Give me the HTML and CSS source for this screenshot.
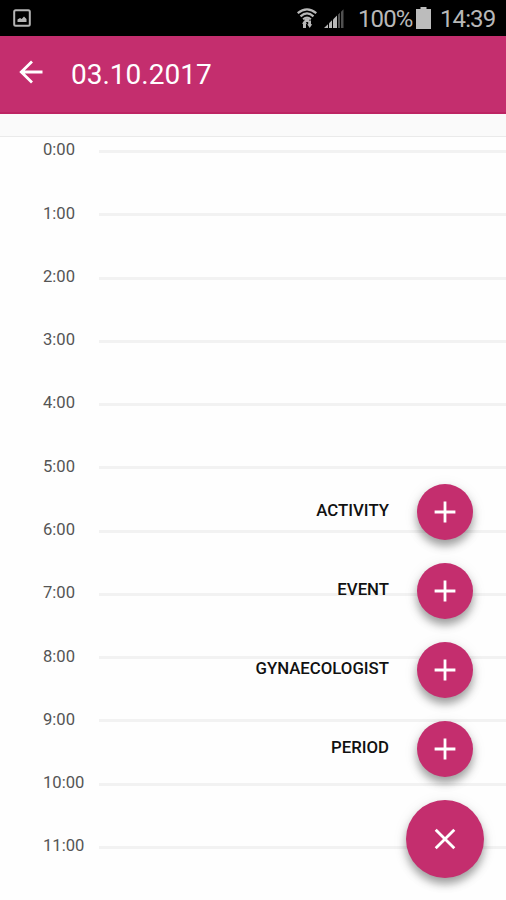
FILE: index.html
```html
<!DOCTYPE html>
<html lang="en">
<head>
<meta charset="utf-8">
<title>03.10.2017</title>
<link rel="stylesheet" href="styles.css">
</head>
<body>
<div class="screen">
  <div class="status">
    <svg class="status-picture" width="18" height="18" viewBox="0 0 18 18"><rect x="1.2" y="1.2" width="15.6" height="15.6" rx="1.5" fill="none" stroke="#b5b5b5" stroke-width="2"/><path d="M4.5 13V10.5L7 9L8.7 10L11 7.5L13.5 10V13Z" fill="#b5b5b5"/></svg>
    <svg class="status-wifi" width="20" height="21" viewBox="0 0 20 21"><g fill="none" stroke="#b8b8b8" stroke-width="2.2"><path d="M.7 5.1Q10-2.5 19.3 5.1"/><path d="M3.5 8.3Q10 2.6 16.5 8.3"/><path d="M6.2 11.4Q10 7.9 13.8 11.4"/></g><path d="M8 10.5H12V14H8ZM5 15.7L7.5 12L10 15.7H9V20H6V15.7ZM10.2 16.3H11.2V12.5H14V16.3H15.2L12.7 20Z" fill="#b8b8b8"/></svg>
    <svg class="status-signal" width="20" height="19" viewBox="0 0 20 19"><path d="M0 19L4 15.2V19Z" fill="#b8b8b8"/><path d="M5 14.2L8 11.3V19H5Z" fill="#b8b8b8"/><path d="M9 10.4L13 6.5V19H9Z" fill="#b8b8b8"/><path d="M14 5.6L16 3.7V19H14ZM17 2.7L19.5 .3V19H17Z" fill="#505050"/></svg>
    <span class="status-percent">100%</span>
    <svg class="status-battery" width="15" height="22" viewBox="0 0 15 22"><path d="M4.5 0H10.5V2H15V22H0V2H4.5Z" fill="#bcbcbc"/></svg>
    <span class="status-time">14:39</span>
  </div>
  <header class="appbar">
    <svg class="back" width="24" height="24" viewBox="0 0 24 24"><path d="M23.5 12H2.5M13 1.6L2.3 12L13 22.4" fill="none" stroke="#fff" stroke-width="2.8"/></svg>
    <h1 class="title">03.10.2017</h1>
  </header>
  <div class="allday"></div>
  <main class="hours">
    <div class="hour"><span class="hour-label">0:00</span><i class="rule"></i></div>
    <div class="hour"><span class="hour-label">1:00</span><i class="rule"></i></div>
    <div class="hour"><span class="hour-label">2:00</span><i class="rule"></i></div>
    <div class="hour"><span class="hour-label">3:00</span><i class="rule"></i></div>
    <div class="hour"><span class="hour-label">4:00</span><i class="rule"></i></div>
    <div class="hour"><span class="hour-label">5:00</span><i class="rule"></i></div>
    <div class="hour"><span class="hour-label">6:00</span><i class="rule"></i></div>
    <div class="hour"><span class="hour-label">7:00</span><i class="rule"></i></div>
    <div class="hour"><span class="hour-label">8:00</span><i class="rule"></i></div>
    <div class="hour"><span class="hour-label">9:00</span><i class="rule"></i></div>
    <div class="hour"><span class="hour-label">10:00</span><i class="rule"></i></div>
    <div class="hour"><span class="hour-label">11:00</span><i class="rule"></i></div>
  </main>
  <div class="actions">
    <div class="action"><span class="action-label">ACTIVITY</span><span class="fab"><svg width="22" height="22" viewBox="0 0 22 22"><path d="M.6 11H21.4M11 .6V21.4" stroke="#fff" stroke-width="2.8"/></svg></span></div>
    <div class="action"><span class="action-label">EVENT</span><span class="fab"><svg width="22" height="22" viewBox="0 0 22 22"><path d="M.6 11H21.4M11 .6V21.4" stroke="#fff" stroke-width="2.8"/></svg></span></div>
    <div class="action"><span class="action-label">GYNAECOLOGIST</span><span class="fab"><svg width="22" height="22" viewBox="0 0 22 22"><path d="M.6 11H21.4M11 .6V21.4" stroke="#fff" stroke-width="2.8"/></svg></span></div>
    <div class="action"><span class="action-label">PERIOD</span><span class="fab"><svg width="22" height="22" viewBox="0 0 22 22"><path d="M.6 11H21.4M11 .6V21.4" stroke="#fff" stroke-width="2.8"/></svg></span></div>
    <span class="fab fab-main"><svg width="22" height="22" viewBox="0 0 22 22"><path d="M1.7 1.7L20.3 20.3M20.3 1.7L1.7 20.3" stroke="#fff" stroke-width="2.8"/></svg></span>
  </div>
</div>
</body>
</html>
```

FILE: styles.css
```css
* { box-sizing: border-box; }
body { margin: 0; font-family: Roboto, sans-serif; background: #fefefe; }
svg { display: block; flex: none; }

.screen {
  position: relative;
  width: 506px;
  height: 900px;
  overflow: hidden;
  display: flex;
  flex-direction: column;
}

.status {
  flex: none;
  height: 36px;
  display: flex;
  align-items: center;
  padding: 0 10px 0 13px;
  background: #000;
  color: #b8b8b8;
  font-size: 24px;
  line-height: 36px;
}
.status-wifi { margin-left: auto; }
.status-signal { margin-left: 7px; }
.status-percent { width: 55px; margin-left: 14px; padding-top: 2px; letter-spacing: -0.9px; white-space: nowrap; }
.status-battery { margin: 0 9px 0 3px; }
.status-time { width: 56px; padding-top: 2px; letter-spacing: -0.9px; white-space: nowrap; }

.appbar {
  flex: none;
  height: 78px;
  display: flex;
  align-items: center;
  padding: 0 19px;
  background: #c42e6e;
  border-bottom: 2px solid #bd2463;
  color: #fff;
}
.back { margin-top: -4px; }
.title { margin: 2px 0 0 28px; font-size: 28px; font-weight: 400; line-height: 32px; }

.allday {
  flex: none;
  height: 23px;
  background: #fafafa;
  border-bottom: 1px solid #eaeaea;
}

.hours { flex: none; }
.hour { height: 63.27px; display: flex; align-items: flex-start; padding-left: 43px; }
.hour-label { width: 56px; padding-top: 3.4px; font-size: 16.6px; line-height: 20px; color: #555; }
.rule { flex: 1; height: 3px; margin-top: 13px; background: #f2f2f2; }

.actions {
  position: absolute;
  right: 22px;
  bottom: 22.5px;
  display: flex;
  flex-direction: column;
  align-items: flex-end;
  gap: 22.8px;
}
.action { display: flex; align-items: center; gap: 28px; padding-right: 11px; }
.action-label { margin-top: -4px; font-size: 16.8px; font-weight: 500; line-height: 20px; color: #111; }
.fab {
  width: 56px;
  height: 56px;
  border-radius: 50%;
  display: grid;
  place-items: center;
  background: #c42e6e;
  box-shadow: 0 6px 8px rgba(0, 0, 0, .34), 0 3px 16px rgba(0, 0, 0, .08);
}
.fab-main { width: 78px; height: 78px; }
```
